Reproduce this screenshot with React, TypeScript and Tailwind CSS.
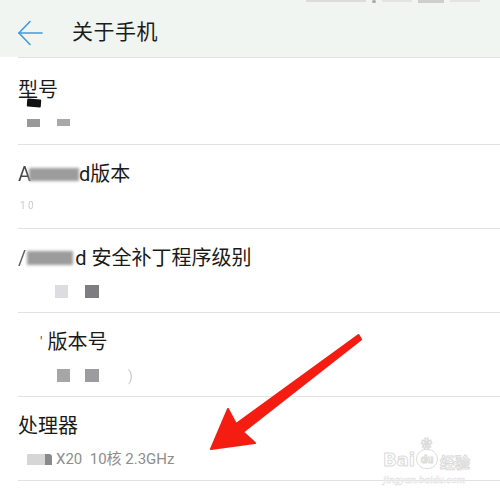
import React from 'react';

const font = { fontFamily: 'Roboto, "Noto Sans CJK SC", sans-serif' };

const Blob = ({ className }: { className: string }) => (
  <span className={`inline-block align-middle ${className}`} />
);

const Row = ({ title, sub, first }: { title: React.ReactNode; sub: React.ReactNode; first?: boolean }) => (
  <div className={`${first ? 'h-[87px] pt-[19px]' : 'h-[84px] pt-[16px]'} border-t border-[#e2e2e2]`}>
    <div className="text-[20px] leading-[26px] text-[#1a1a1a] flex items-center h-[26px]">{title}</div>
    <div className="mt-[9px] h-[20px] text-[15px] leading-[20px] text-[#8a8a8a] flex items-center">{sub}</div>
  </div>
);

export default function App() {
  return (
    <div className="relative w-[500px] h-[497px] overflow-hidden bg-white" style={font}>
      {/* header */}
      <div className="h-[57px] bg-[#f1f5f1] relative">
        <div className="absolute top-0 right-[20px] flex gap-[6px] opacity-40">
          <span className="w-[60px] h-[2px] bg-[#bbb]" />
          <span className="w-[4px] h-[3px] rounded-full bg-[#444]" />
          <span className="w-[30px] h-[2px] bg-[#ccc]" />
          <span className="w-[26px] h-[3px] bg-[#999]" />
          <span className="w-[30px] h-[2px] bg-[#ccc]" />
        </div>
        <div className="flex items-center h-full pl-[17px] pt-[8px]">
          <svg width="27" height="26" viewBox="0 0 27 26" fill="none" stroke="#3d9be4" strokeWidth="1.6" strokeLinecap="round">
            <path d="M2 13 H25" />
            <path d="M13 1.5 L2 13 L13 24.5" />
          </svg>
          <span className="ml-[28px] text-[21px] text-[#1c1c1c] tracking-[0.5px]">关于手机</span>
        </div>
      </div>

      <div className="ml-[18px]">
        <Row
          first
          title={
            <span className="relative">
              型号
              <span className="absolute left-[9px] top-[22px] w-[14px] h-[8px] bg-[#111] rounded-[1px] rotate-[4deg]" />
            </span>
          }
          sub={
            <span className="flex gap-[17px] pl-[9px] pt-[2px]">
              <Blob className="w-[13px] h-[8px] bg-[#999] blur-[0.4px]" />
              <Blob className="w-[13px] h-[7px] bg-[#a8a8a8] blur-[0.4px]" />
            </span>
          }
        />
        <Row
          title={
            <>
              <span className="opacity-80">A</span>
              <Blob className="w-[50px] h-[13px] bg-[#9c9c9c] blur-[1.5px] -ml-[2px]" />
              <span>d版本</span>
            </>
          }
          sub={<span className="pl-[2px] text-[10px] text-[#ccc] blur-[0.6px]">1 0</span>}
        />
        <Row
          title={
            <>
              <span className="opacity-70">/</span>
              <Blob className="w-[46px] h-[14px] bg-[#9c9c9c] blur-[1.5px] ml-[1px]" />
              <span className="ml-[2px]">d 安全补丁程序级别</span>
            </>
          }
          sub={
            <span className="flex gap-[17px] pl-[37px] pt-[3px]">
              <Blob className="w-[13px] h-[13px] bg-[#dcdde0]" />
              <Blob className="w-[14px] h-[13px] bg-[#7c7e82]" />
            </span>
          }
        />
        <Row
          title={
            <>
              <span className="ml-[22px] text-[#555] text-[14px]">'</span>
              <span className="ml-[5px]">版本号</span>
            </>
          }
          sub={
            <span className="flex items-center gap-[15px] pl-[39px] pt-[3px]">
              <Blob className="w-[13px] h-[13px] bg-[#a6a6a8]" />
              <Blob className="w-[14px] h-[13px] bg-[#9c9c9e]" />
              <span className="ml-[14px] text-[#ccc] text-[14px] blur-[0.5px]">)</span>
            </span>
          }
        />
        <Row
          title={<span>处理器</span>}
          sub={
            <span className="flex items-center pl-[9px] pt-[2px]">
              <span className="flex">
                <span className="w-[18px] h-[11px] bg-[#d6d6d6]" />
                <span className="w-[7px] h-[11px] bg-[#8a8a8a] rounded-tr-[3px]" />
              </span>
              <span className="ml-[4px] text-[#8d8d8d]">X20&nbsp;&nbsp;10核 2.3GHz</span>
            </span>
          }
        />
        <div className="border-t border-[#e2e2e2]" />
      </div>

      {/* red arrow annotation */}
      <svg className="absolute left-0 top-0" width="500" height="497" viewBox="0 0 500 497">
        <polygon
          points="211,449 228,409 236,424 358.5,335 361,339.5 243,432 255,443"
          fill="#f51c12"
          stroke="#f51c12"
          strokeWidth="2"
          strokeLinejoin="round"
        />
      </svg>

      {/* watermark */}
      <div className="absolute left-[383px] top-[442px] leading-none text-white [-webkit-text-stroke:1px_#dcdcdc]">
        <div className="flex items-end h-[27px]">
          <span className="text-[18px] font-bold" style={{ fontFamily: '"DejaVu Sans", sans-serif' }}>Bai</span>
          <span className="relative ml-[1px]">
            <span className="absolute -top-[10px] left-[5px] text-[11px]">❀</span>
            <span className="inline-flex items-center justify-center w-[22px] h-[20px] rounded-full border border-[#dcdcdc] text-[11px] font-bold">du</span>
          </span>
          <span className="ml-[2px] text-[15px] font-bold" style={{ fontFamily: '"Noto Sans CJK SC", sans-serif' }}>经验</span>
        </div>
        <div className="mt-[5px] text-[11px] italic [-webkit-text-stroke:0.5px_#e2e2e2]" style={{ fontFamily: '"Liberation Serif", serif' }}>jingyan.baidu.com</div>
      </div>
    </div>
  );
}
